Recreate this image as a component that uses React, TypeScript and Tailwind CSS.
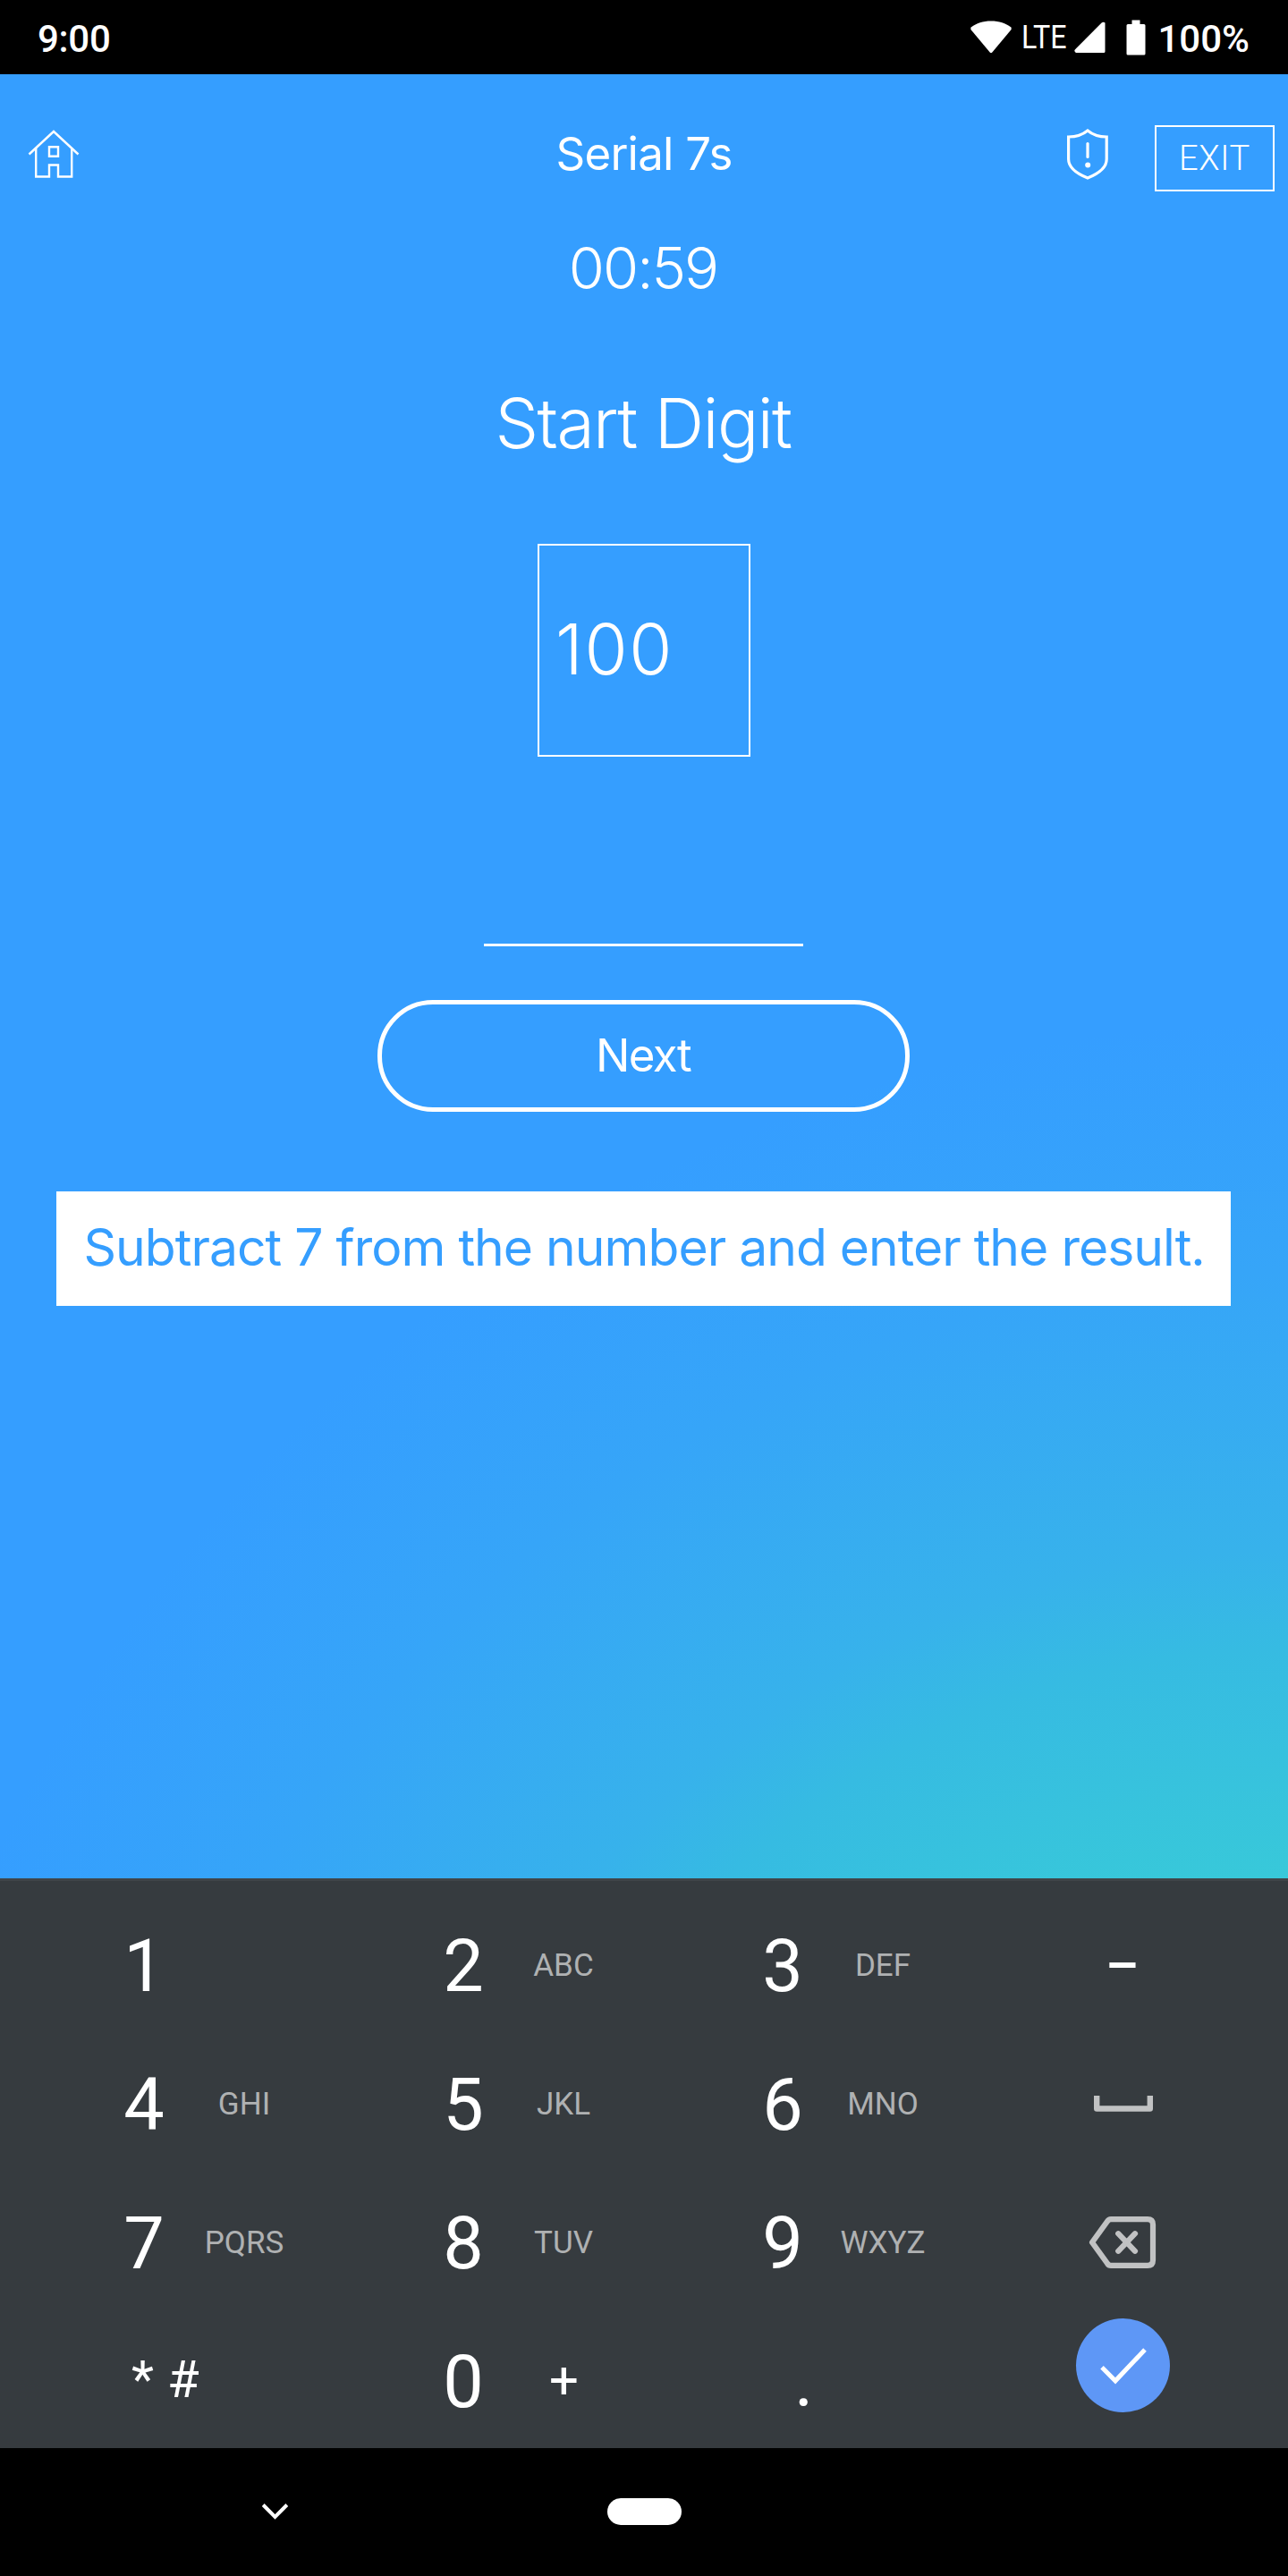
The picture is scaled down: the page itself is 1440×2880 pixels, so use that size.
const KEYS = [
  { digit: "1", letters: "" },
  { digit: "2", letters: "ABC" },
  { digit: "3", letters: "DEF" },
  { digit: "4", letters: "GHI" },
  { digit: "5", letters: "JKL" },
  { digit: "6", letters: "MNO" },
  { digit: "7", letters: "PQRS" },
  { digit: "8", letters: "TUV" },
  { digit: "9", letters: "WXYZ" },
];

function StatusBar() {
  return (
    <div className="flex h-[83px] items-center justify-between bg-black pr-[43px] pl-[42px] font-['Roboto',sans-serif] text-white">
      <span className="pt-[4px] text-[42px] leading-none font-medium tracking-[-0.3px]">9:00</span>
      <div className="flex h-full items-center">
        <svg className="h-[38px] w-[46px]" viewBox="0 0 46 38" fill="#fff">
          <path d="M23 0.5C32 0.5 39.5 3 45 7.2Q46.4 8.8 45.2 10.6L24.3 35.6Q23 37 21.7 35.6L0.8 10.6Q-0.4 8.8 1 7.2C6.5 3 14 0.5 23 0.5Z" />
        </svg>
        <span className="ml-[11px] w-[52px] origin-left scale-x-[0.87] text-[37px] leading-none">LTE</span>
        <svg className="ml-[7px] h-[36px] w-[35px]" viewBox="0 0 35 36" fill="#fff">
          <path d="M30.6 1.6Q32.5 0 34.5 1.6V33.5Q34.5 35 33 35H2Q-0.5 33.5 0.8 31.4Z" />
        </svg>
        <svg className="ml-[23px] h-[40px] w-[22px]" viewBox="0 0 22 40" fill="#fff">
          <path d="M6.500 0.500H15.500V5H20Q21.500 5 21.500 6.500V38Q21.500 39.500 20 39.500H2Q0.500 39.500 0.500 38V6.500Q0.500 5 2 5H6.500Z" />
        </svg>
        <span className="ml-[13px] pt-[4px] text-[42px] leading-none font-medium">100%</span>
      </div>
    </div>
  );
}

function Header() {
  return (
    <header className="grid h-[177px] grid-cols-[1fr_auto_1fr] items-center">
      <svg className="ml-[31px] h-[56px] w-[58px]" viewBox="0 0 58 56" fill="none" stroke="#fff" strokeWidth="2.4">
        <path d="M1.5 28.5L29 3L56.5 28.5" />
        <path d="M9.2 21.5V53.5H24V40.5H34V53.5H49.2V21.5" />
        <path d="M24 20.3H34V30.8H24Z" />
      </svg>
      <h1 className="text-[51px] leading-none font-normal tracking-[-0.75px]">Serial 7s</h1>
      <div className="flex items-center justify-end pr-[15px]">
        <svg className="h-[58px] w-[48px]" viewBox="0 0 48 58" fill="none" stroke="#fff" strokeWidth="3.2">
          <path d="M24 3C18 8 10.5 10 2.6 10V35C2.6 45 14 52 24 56C34 52 45.2 45 45.2 35V10C37.5 10 30 8 24 3Z" />
          <path d="M24 17.5V32.5" strokeLinecap="round" />
          <circle cx="24.2" cy="41.5" r="3" fill="#fff" stroke="none" />
        </svg>
        <button className="mt-[11px] ml-[51px] flex h-[74px] w-[134px] items-center justify-center border-2 border-white font-['Roboto',sans-serif] text-[38px] leading-none font-[340] tracking-[0.7px]">
          EXIT
        </button>
      </div>
    </header>
  );
}

function Task() {
  return (
    <main className="flex flex-col items-center pr-[2px]">
      <div className="h-[80px] text-[65px] leading-[80px] font-light tracking-[-2px]">00:59</div>
      <h2 className="mt-[83px] h-[100px] text-[77px] leading-[100px] font-light tracking-[-1.6px]">Start Digit</h2>
      <div className="mt-[85px] ml-[2px] flex h-[238px] w-[238px] items-center border-2 border-white pb-[2px] pl-[18px] text-[78px] leading-none font-light tracking-[1.7px]">
        100
      </div>
      <div className="mt-[209px] h-[3px] w-[357px] bg-white" />
      <button className="mt-[60px] flex h-[125px] w-[595px] items-center justify-center rounded-[62px] border-[5px] border-white pb-[2px] text-[51px] leading-none tracking-[-1.6px]">
        Next
      </button>
      <p className="mt-[89px] h-[128px] w-[1313px] bg-white pl-[31px] text-[57px] leading-[126px] tracking-[-0.98px] whitespace-nowrap text-[#359eff]">
        Subtract 7 from the number and enter the result.
      </p>
    </main>
  );
}

function DigitKey({ digit, letters }: { digit: string; letters: string }) {
  return (
    <button className="flex h-[155px] items-center pl-[101px]">
      <span className="w-[120px] pt-[3px] text-[81px] leading-none">{digit}</span>
      <span className="w-[104px] pt-[1px] text-center text-[35px] leading-none text-[#afb1b2]">{letters}</span>
    </button>
  );
}

function Keypad() {
  return (
    <div className="flex h-[637px] overflow-hidden border-t-[3px] border-[#3f4448] bg-[#363b3f] pt-[16px] font-['Roboto',sans-serif] text-white">
      <div className="grid grid-cols-[357px_357px_357px] content-start">
        {KEYS.map((k) => (
          <DigitKey key={k.digit} digit={k.digit} letters={k.letters} />
        ))}
        <button className="flex h-[155px] items-center pb-[3px] pl-[147px] text-[58px] leading-none">
          <span className="w-[40px] text-left">*</span>
          <span>#</span>
        </button>
        <button className="flex h-[155px] items-center pl-[101px]">
          <span className="w-[120px] pt-[3px] text-[81px] leading-none">0</span>
          <span className="w-[104px] pb-[1px] pl-[1px] text-center text-[58px] leading-none">+</span>
        </button>
        <button className="flex h-[155px] items-center pt-[1px] pl-[174px] text-[81px] leading-none">.</button>
      </div>
      <div className="flex flex-1 flex-col items-center">
        <button className="flex h-[155px] items-center justify-center pr-[2px] text-[58px] leading-none font-semibold">–</button>
        <button className="flex h-[155px] items-center justify-center">
          <svg className="h-[20px] w-[68px]" viewBox="0 0 68 20" fill="none" stroke="#c1c2c3" strokeWidth="6.4" strokeLinejoin="round">
            <path d="M4.2 1V15.5H63.800V1" />
          </svg>
        </button>
        <button className="flex h-[155px] items-center justify-center pr-[2px]">
          <svg className="h-[60px] w-[76px]" viewBox="0 0 76 60" fill="none" stroke="#c1c2c3" strokeWidth="6.2" strokeLinejoin="round" strokeLinecap="round">
            <path d="M25 4.1H66Q72 4.1 72 10V50Q72 55.9 66 55.9H25Q22.5 55.9 21 53.5L4 30L21 6.5Q22.5 4.1 25 4.1Z" />
            <path d="M33.2 20.2L52 39.800M52 20.2L33.2 39.800" />
          </svg>
        </button>
        <button className="mt-[8px] flex h-[105px] w-[105px] items-center justify-center rounded-full bg-[#5e97f6]">
          <svg className="h-[42px] w-[54px]" viewBox="0 0 54 42" fill="none" stroke="#fff" strokeWidth="5">
            <path d="M3 22.800L18 37.800L51 3" />
          </svg>
        </button>
      </div>
    </div>
  );
}

function NavBar() {
  return (
    <div className="flex h-[143px] items-center bg-black pb-[1px]">
      <svg className="ml-[292px] h-[20px] w-[31px]" viewBox="0 0 31 20" fill="none" stroke="#fff" strokeWidth="4">
        <path d="M2.2 2.5L15.5 15.8L28.8 2.5" />
      </svg>
      <div className="ml-[356px] h-[30px] w-[83px] rounded-full bg-white" />
    </div>
  );
}

export default function App() {
  return (
    <div className="flex h-[2880px] w-[1440px] flex-col overflow-hidden bg-black font-['Inter',sans-serif] text-white">
      <StatusBar />
      <div className="h-[2017px] bg-[radial-gradient(circle_at_1440px_2650px,#38c9d9_620px,#36bbe2_890px,#37b2eb_1000px,#36a5f8_1310px,#359eff_1590px)]">
        <Header />
        <Task />
      </div>
      <Keypad />
      <NavBar />
    </div>
  );
}
